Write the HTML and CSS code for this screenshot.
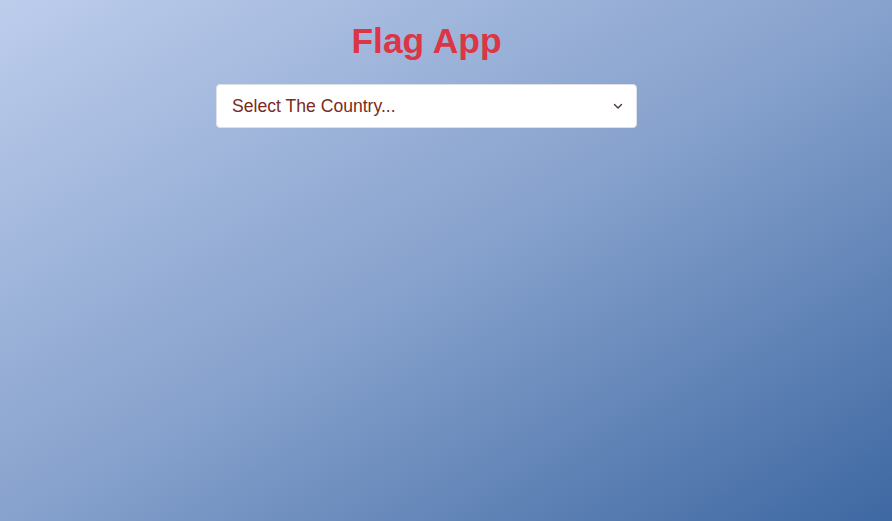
FILE: index.html
```html
<!DOCTYPE html>
<html lang="en">
<head>
<meta charset="utf-8">
<title>Flag App</title>
<link rel="stylesheet" href="styles.css">
</head>
<body>
<main class="app">
  <h1 class="title">Flag App</h1>
  <div class="picker">
    <select class="country-select">
      <option>Select The Country...</option>
    </select>
    <svg class="chevron" width="10" height="7" viewBox="0 0 10 7" aria-hidden="true"><path fill="none" stroke="#4a3340" stroke-linecap="round" stroke-linejoin="round" stroke-width="1.4" d="M1.5 1.5 5 5l3.5-3.5"/></svg>
  </div>
</main>
</body>
</html>
```
FILE: styles.css
```css
* { box-sizing: border-box; }
html, body { height: 100%; }
body {
  margin: 0;
  font-family: "Liberation Sans", Arial, sans-serif;
  background: linear-gradient(to bottom right, #bdcdec 0%, #87a2cd 50%, #3e68a2 100%);
  background-attachment: fixed;
}
.app {
  width: 421px;
  margin-left: 216px;
  padding-top: 20px;
  display: flex;
  flex-direction: column;
}
.title {
  margin: 0 0 22px;
  text-align: center;
  font-size: 35.4px;
  line-height: 1.2;
  font-weight: 700;
  color: #dc3545;
}
.picker { position: relative; }
.country-select {
  appearance: none;
  -webkit-appearance: none;
  width: 100%;
  height: 44px;
  padding: 8px 40px 8px 15px;
  font-family: "Liberation Sans", Arial, sans-serif;
  font-size: 17.6px;
  line-height: 1.5;
  color: #7a2b22;
  background: #fff;
  border: 1px solid #dee2e6;
  border-radius: 4px;
}
.chevron {
  position: absolute;
  right: 14px;
  top: 19px;
  pointer-events: none;
}
```
